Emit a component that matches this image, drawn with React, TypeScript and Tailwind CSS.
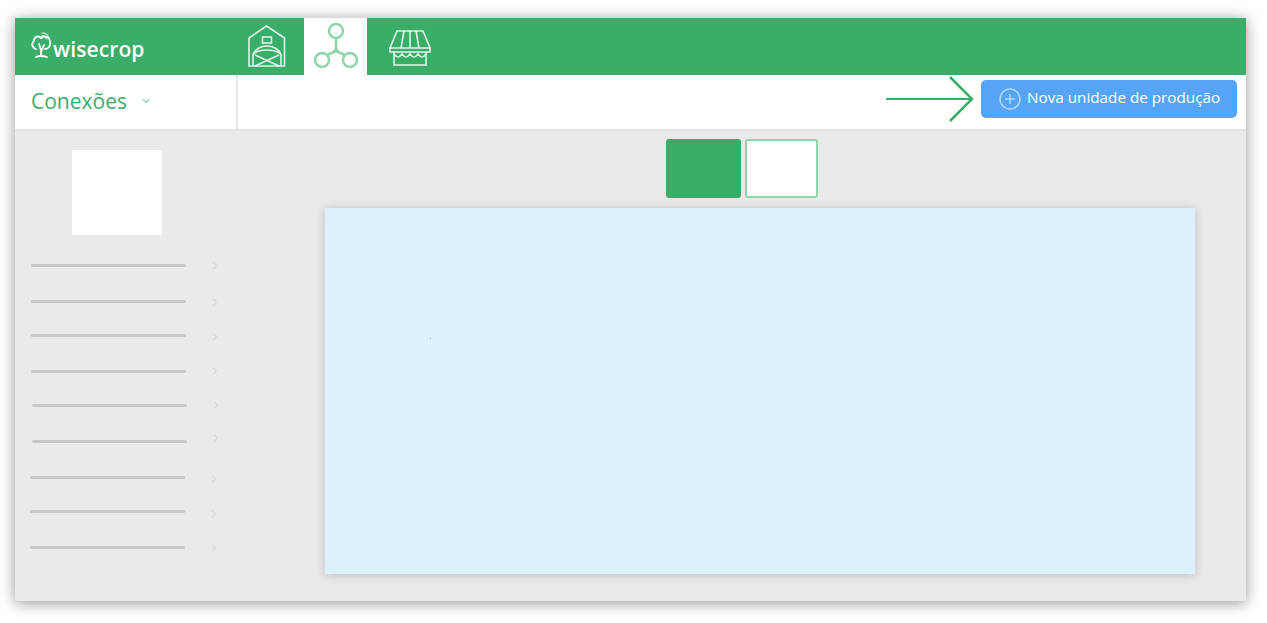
import { ChevronDown, ChevronRight } from "lucide-react";

const rows = [
  { row: "mt-[29px] pl-[16px]", chevron: "" },
  { row: "mt-[33px] pl-[16px]", chevron: "" },
  { row: "mt-[31px] pl-[16px]", chevron: "translate-y-[1px]" },
  { row: "mt-[33px] pl-[16px]", chevron: "-translate-y-[1px]" },
  { row: "mt-[31px] pl-[17px]", chevron: "-translate-y-[1px]" },
  { row: "mt-[33px] pl-[17px]", chevron: "-translate-y-[4px]" },
  { row: "mt-[33px] pl-[15px]", chevron: "translate-y-[1px]" },
  { row: "mt-[31px] pl-[15px]", chevron: "translate-y-[2px]" },
  { row: "mt-[33px] pl-[15px]", chevron: "" },
];

function Logo() {
  return (
    <div className="flex items-start ml-[16px] mt-[14px]">
      <svg width="22" height="27" viewBox="0 0 22 27" fill="none" stroke="white" strokeWidth="1.8" strokeLinecap="round">
        <path d="M5 17C1 16 0 11 3 9 3 5 7 3 10 6 13 3 19 5 19 10 20 14 17 17 14 17" />
        <path d="M8 12C9 15 10 17 10 20V24M13 13C12 15 11 17 10.500 19" />
        <path d="M5 25Q10 23 16 25" />
        <path d="M11 1C14 1 17 3 18 6" strokeWidth="1.5" strokeOpacity="0.6" />
        <path d="M11 3.500C13 3.500 15 5 15.500 7" strokeWidth="1.500" strokeOpacity="0.6" />
      </svg>
      <span className="font-['Open_Sans',sans-serif] font-semibold text-[21px] leading-[28px] mt-[3px] text-white tracking-[0.1px]">wisecrop</span>
    </div>
  );
}

function BarnIcon() {
  return (
    <svg width="38" height="43" viewBox="0 0 38 43" fill="none" stroke="white" strokeWidth="1.6" strokeOpacity="0.85">
      <path d="M1 13 18.500 1l18 12v28H1z" />
      <rect x="14.500" y="12" width="9" height="6" />
      <path d="M5 41V30c2-6 8-9 14-9s12 3 14 9v11" />
      <path d="M5 29c4-3 9-4 14-4s10 1 14 4" />
      <path d="M7 30l24 11M31 30 7 41" />
    </svg>
  );
}

function NetworkIcon() {
  return (
    <svg width="44" height="46" viewBox="0 0 44 46" fill="none" stroke="#8ed5ac" strokeWidth="2.500">
      <circle cx="22" cy="8" r="7" />
      <circle cx="8" cy="37" r="7" />
      <circle cx="36" cy="37" r="7" />
      <path d="M22 15v13M22 28l-9 4M22 28l9 4" />
      <path d="M20 28l2-4 2 4z" strokeWidth="1.500" />
    </svg>
  );
}

function MarketIcon() {
  return (
    <svg width="42" height="36" viewBox="0 0 42 36" fill="none" stroke="white" strokeWidth="1.6" strokeOpacity="0.85">
      <path d="M8 1h26l7 17H1z" />
      <path d="M15 1 12 18M21 1v17M27 1l3 17" />
      <path d="M1 18v4h40v-4" />
      <path d="M5 22v13h32V22" />
      <path d="M5 24c3 4 5 4 8 0 3 4 5 4 8 0 3 4 5 4 8 0 3 4 5 4 8 0" />
    </svg>
  );
}

function LongArrow() {
  return (
    <svg width="88" height="46" viewBox="0 0 88 46" fill="none" stroke="#3aad69" strokeWidth="2" className="mr-[7px] mt-[1px]">
      <path d="M0 23h86" />
      <path d="M64 1l22 22-22 22" strokeWidth="2.500" />
    </svg>
  );
}

export default function App() {
  return (
    <div className="h-[623px] w-[1267px] bg-white pt-[18px] pl-[15px] font-['Open_Sans',sans-serif] overflow-hidden">
      <div className="w-[1231px] h-[583px] flex flex-col bg-[#eaeaea] shadow-[0_2px_14px_rgba(0,0,0,0.42)]">
        {/* top bar */}
        <div className="h-[57px] bg-[#3aad69] flex shrink-0">
          <div className="w-[233px]">
            <Logo />
          </div>
          <div className="w-[56px] pt-[7px]">
            <BarnIcon />
          </div>
          <div className="w-[63px] bg-white flex justify-center items-start pt-[5px]">
            <NetworkIcon />
          </div>
          <div className="ml-[22px] pt-[12px]">
            <MarketIcon />
          </div>
        </div>

        {/* sub bar */}
        <div className="h-[56px] bg-white flex shrink-0 border-b-2 border-[#e2e2e2]">
          <div className="w-[223px] border-r-2 border-[#e6e6e6] flex items-center pl-[16px] pb-[2px]">
            <span className="text-[21px] leading-[28px] text-[#3aad69]">Conexões</span>
            <ChevronDown size={12} strokeWidth={2} className="text-[#3aad69] ml-[13px]" />
          </div>
          <div className="flex-1 flex justify-end items-start pr-[9px]">
            <LongArrow />
            <button type="button" className="mt-[5px] w-[256px] h-[38px] rounded-[5px] bg-[#56a4f8] flex items-center pl-[18px] text-white">
              <svg width="22" height="22" viewBox="0 0 22 22" fill="none" stroke="white" strokeOpacity="0.55" strokeWidth="1.5" className="mr-[6px]">
                <circle cx="11" cy="11" r="10" />
                <path d="M11 6v10M6 11h10" />
              </svg>
              <span className="text-[15.25px] leading-[20px] -translate-y-[2px]">Nova unidade de produção</span>
            </button>
          </div>
        </div>

        {/* content */}
        <div className="flex-1 flex">
          <div className="w-[222px] pt-[19px]">
            <div className="w-[90px] h-[85px] ml-[57px] bg-white" />
            {rows.map((r, i) => (
              <div key={i} className={`h-[3px] flex items-center ${r.row}`}>
                <div className="w-[155px] h-[3px] bg-[#c8c8c8] rounded-full" />
                <ChevronRight size={12} strokeWidth={2} className={`ml-[23px] text-[#cbcbcb] ${r.chevron}`} />
              </div>
            ))}
          </div>
          <div className="flex-1 pt-[8px]">
            <div className="flex gap-[4px] ml-[429px]">
              <div className="w-[75px] h-[59px] rounded-[3px] bg-[#3aad69]" />
              <div className="w-[73px] h-[59px] rounded-[3px] bg-white border-2 border-[#8fd4ab]" />
            </div>
            <div className="relative w-[870px] h-[366px] ml-[88px] mt-[10px] bg-[#ddf0fe] shadow-[0_1px_10px_rgba(0,0,0,0.2)]">
              <div className="absolute left-[105px] top-[130px] w-px h-px bg-[#9aa5ab]" />
            </div>
          </div>
        </div>
      </div>
    </div>
  );
}
